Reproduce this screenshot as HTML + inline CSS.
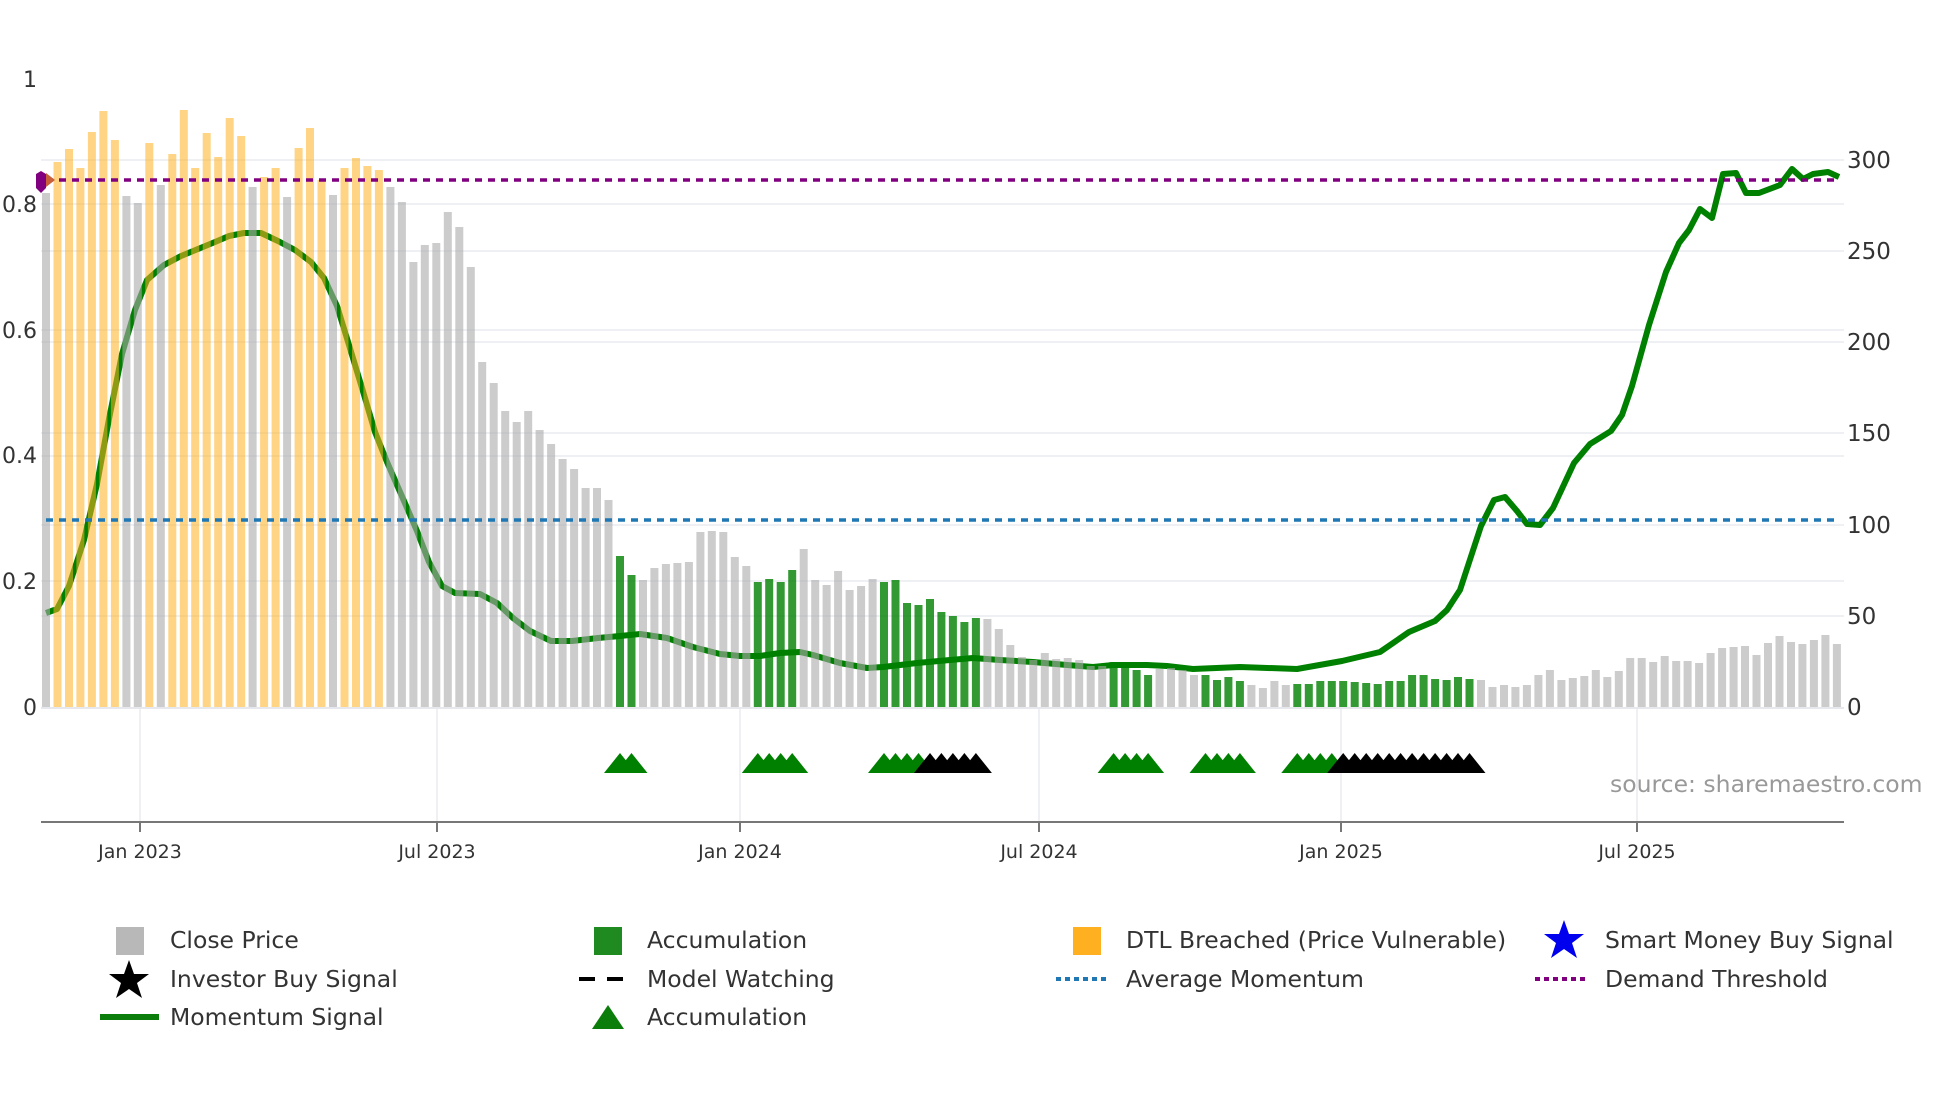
<!DOCTYPE html>
<html><head><meta charset="utf-8"><style>
html,body{margin:0;padding:0;background:#fff;width:1960px;height:1102px;overflow:hidden}
svg{display:block}
text{font-family:"DejaVu Sans","Liberation Sans",sans-serif;fill:#333}
</style></head><body>
<svg id="s" width="1960" height="1102" viewBox="0 0 1960 1102" xmlns="http://www.w3.org/2000/svg">
<g stroke="#eef0f4" stroke-width="2">
<line x1="41" x2="1844" y1="581" y2="581"/><line x1="41" x2="1844" y1="456" y2="456"/><line x1="41" x2="1844" y1="330" y2="330"/><line x1="41" x2="1844" y1="204" y2="204"/>
<line x1="41" x2="1844" y1="616" y2="616"/><line x1="41" x2="1844" y1="525" y2="525"/><line x1="41" x2="1844" y1="433" y2="433"/><line x1="41" x2="1844" y1="342" y2="342"/><line x1="41" x2="1844" y1="251" y2="251"/><line x1="41" x2="1844" y1="160" y2="160"/>
<line x1="140" x2="140" y1="707" y2="822"/><line x1="437" x2="437" y1="707" y2="822"/><line x1="740" x2="740" y1="707" y2="822"/><line x1="1039" x2="1039" y1="707" y2="822"/><line x1="1341" x2="1341" y1="707" y2="822"/><line x1="1637" x2="1637" y1="707" y2="822"/>
</g>
<line x1="41" x2="1844" y1="708" y2="708" stroke="#e6e8ee" stroke-width="2"/>
<polyline fill="none" stroke="#008000" stroke-width="6" stroke-linejoin="round" points="46,613 57,609 69,586 84,540 97,484 109,419 122,354 135,310 147,280 164,265 181,256 198,249 215,242 229,236 244,233 261,233 278,241 295,250 311,262 324,278 337,306 349,345 362,388 375,432 387,462 404,501 417,531 429,562 442,586 455,593 480,594 497,603 513,618 530,631 551,641 572,641 598,638 620,636 640,634 667,638 693,647 720,654 740,656 760,656 780,653 800,652 813,655 840,663 867,668 883,667 917,663 950,660 973,658 1000,660 1033,662 1067,665 1093,667 1113,665 1147,665 1167,666 1193,669 1240,667 1297,669 1342,661 1380,652 1409,632 1435,621 1447,610 1460,590 1481,526 1494,500 1505,497 1517,511 1527,524 1540,525 1553,508 1574,463 1590,444 1611,431 1622,415 1632,386 1649,325 1666,272 1679,243 1689,230 1700,209 1712,218 1723,174 1736,173 1746,193 1759,193 1780,185 1792,169 1803,179 1813,174 1828,172 1839,177"/>
<g id="bars"></g>
<line x1="46" x2="1840" y1="180" y2="180" stroke="#800080" stroke-width="3.5" stroke-dasharray="7,6"/>
<line x1="46" x2="1840" y1="520" y2="520" stroke="#1f77b4" stroke-width="3.5" stroke-dasharray="7,6"/>
<polygon points="41,171 46,174 46,188 41,193 36,188 36,174" fill="#800080"/>
<polygon points="46,173 55,180 46,187" fill="#c8603a"/>
<g id="tri"></g>
<line x1="41" x2="1844" y1="822" y2="822" stroke="#777" stroke-width="2"/>
<g stroke="#777" stroke-width="2"><line x1="140" x2="140" y1="822" y2="832"/><line x1="437" x2="437" y1="822" y2="832"/><line x1="740" x2="740" y1="822" y2="832"/><line x1="1039" x2="1039" y1="822" y2="832"/><line x1="1341" x2="1341" y1="822" y2="832"/><line x1="1637" x2="1637" y1="822" y2="832"/></g>
<g font-size="22" text-anchor="end"><text x="37" y="87">1</text><text x="37" y="212">0.8</text><text x="37" y="338">0.6</text><text x="37" y="463">0.4</text><text x="37" y="589">0.2</text><text x="37" y="715">0</text></g>
<g font-size="23"><text x="1847" y="168">300</text><text x="1847" y="259">250</text><text x="1847" y="350">200</text><text x="1847" y="441">150</text><text x="1847" y="533">100</text><text x="1847" y="624">50</text><text x="1847" y="715">0</text></g>
<g font-size="19" text-anchor="middle"><text x="140" y="858">Jan 2023</text><text x="437" y="858">Jul 2023</text><text x="740" y="858">Jan 2024</text><text x="1039" y="858">Jul 2024</text><text x="1341" y="858">Jan 2025</text><text x="1637" y="858">Jul 2025</text></g>
<text x="1610" y="792" font-size="23.5" style="fill:#999">source: sharemaestro.com</text>
<g font-size="23.5">
<rect x="116" y="927" width="28" height="28" fill="#b8b8b8"/><text x="170" y="948">Close Price</text>
<rect x="594" y="927" width="28" height="28" fill="#1f8a1f"/><text x="647" y="948">Accumulation</text>
<rect x="1073" y="927" width="28" height="28" fill="#ffb020"/><text x="1126" y="948">DTL Breached (Price Vulnerable)</text>
<polygon points="1564,920 1569,934 1584,934 1572,943 1577,958 1564,949 1551,958 1556,943 1544,934 1559,934" fill="#0000ee"/><text x="1605" y="948">Smart Money Buy Signal</text>
<polygon points="129,960 134,974 149,974 137,983 142,998 129,989 116,998 121,983 109,974 124,974" fill="#000"/><text x="170" y="987">Investor Buy Signal</text>
<line x1="579" x2="631" y1="979" y2="979" stroke="#000" stroke-width="4" stroke-dasharray="16,12"/><text x="647" y="987">Model Watching</text>
<line x1="1056" x2="1110" y1="979" y2="979" stroke="#1f77b4" stroke-width="4" stroke-dasharray="5,4"/><text x="1126" y="987">Average Momentum</text>
<line x1="1535" x2="1589" y1="979" y2="979" stroke="#800080" stroke-width="4" stroke-dasharray="5,4"/><text x="1605" y="987">Demand Threshold</text>
<line x1="100" x2="159" y1="1017" y2="1017" stroke="#0a7d0a" stroke-width="6"/><text x="170" y="1025">Momentum Signal</text>
<polygon points="608,1005 624,1029 592,1029" fill="#0a7d0a"/><text x="647" y="1025">Accumulation</text>
</g>
</svg>
<script>
var tops=[193,162,149,168,132,111,140,196,203,143,185,154,110,168,133,157,118,136,187,177,168,197,148,128,180,195,168,158,166,170,187,202,262,245,243,212,227,267,362,383,411,422,411,430,444,459,469,488,488,500,
556,575,580,568,564,563,562,532,531,532,557,566,582,579,582,570,549,580,585,571,590,586,579,582,580,603,605,599,612,616,622,618,619,629,645,657,660,653,659,658,
660,666,666,662,663,670,675,669,668,670,675,675,680,677,681,685,688,681,685,684,684,681,681,681,682,683,684,681,681,675,675,679,680,677,679,
680,687,685,687,685,675,670,680,678,676,670,677,671,658,658,662,656,661,661,663,653,648,647,646,655,643,636,642,644,640,635,644];
var orange=[1,2,3,4,5,6,9,11,12,13,14,15,16,17,19,20,22,23,24,26,27,28,29];
var green=[50,51,62,63,64,65,73,74,75,76,77,78,79,80,81,93,94,95,96,101,102,103,104];
for(var i=109;i<=124;i++)green.push(i);
var g=document.getElementById("bars"),h="";
for(var k=0;k<tops.length;k++){var x=46+11.48*k-4;var c="rgba(170,170,170,0.6)";
if(orange.indexOf(k)>=0)c="rgba(255,176,32,0.55)";if(green.indexOf(k)>=0)c="rgba(0,128,0,0.8)";
h+='<rect x="'+x.toFixed(1)+'" y="'+tops[k]+'" width="8" height="'+(707-tops[k])+'" fill="'+c+'"/>';}
g.innerHTML=h;
var t="",gi=[50,51,62,63,64,65,73,74,75,76,93,94,95,96,101,102,103,104,109,110,111,112],bi=[77,78,79,80,81];
for(i=113;i<=124;i++)bi.push(i);
function tri(k,c){var x=46+11.48*k;return '<polygon points="'+x.toFixed(1)+',753 '+(x+16).toFixed(1)+',773 '+(x-16).toFixed(1)+',773" fill="'+c+'"/>';}
gi.forEach(function(k){t+=tri(k,"#008000")});bi.forEach(function(k){t+=tri(k,"#000")});
document.getElementById("tri").innerHTML=t;
</script>
</body></html>
